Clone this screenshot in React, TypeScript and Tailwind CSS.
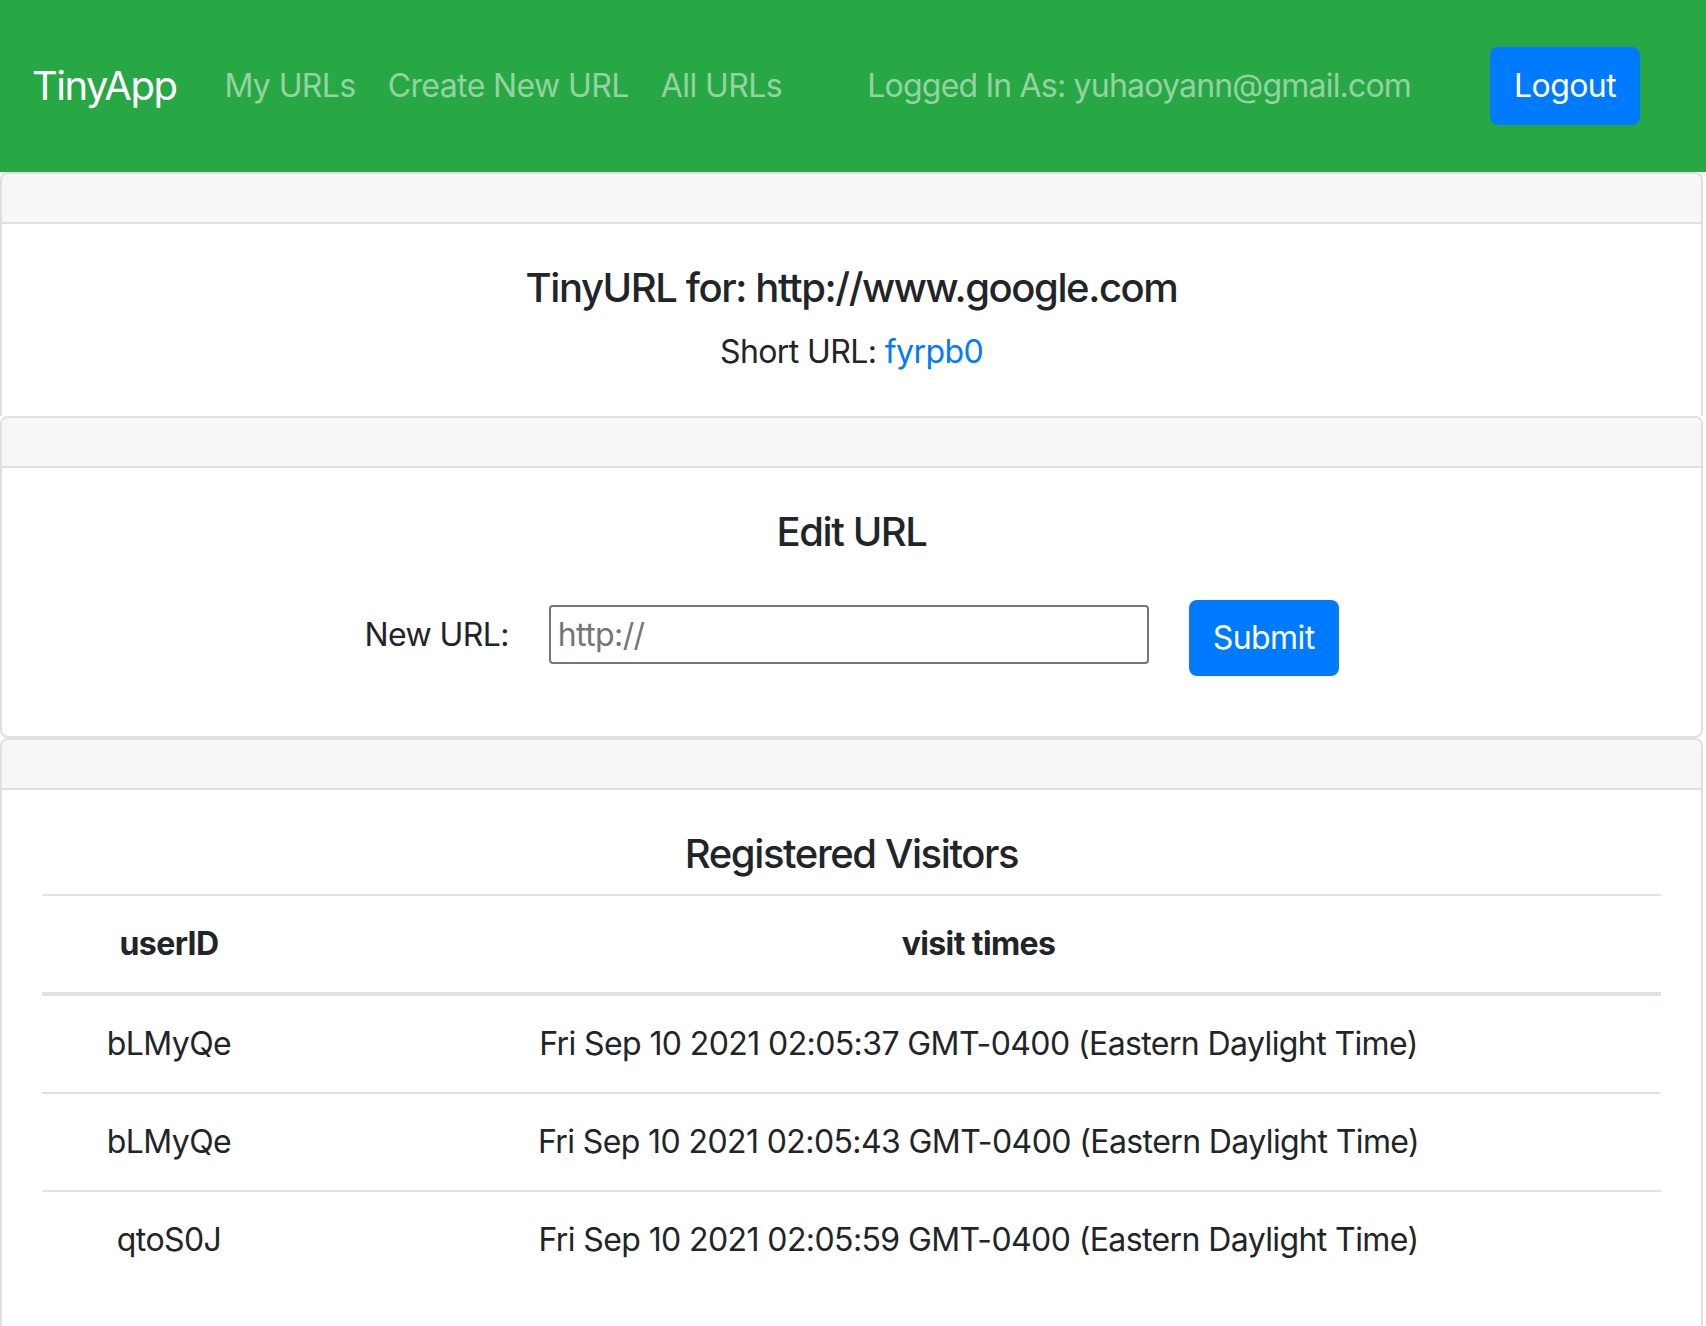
import React from "react";

// ─── Data ─────────────────────────────────────────────────────────────────────

const NAV_LINKS = ["My URLs", "Create New URL", "All URLs"];

const VISITS = [
  { userID: "bLMyQe", time: "Fri Sep 10 2021 02:05:37 GMT-0400 (Eastern Daylight Time)" },
  { userID: "bLMyQe", time: "Fri Sep 10 2021 02:05:43 GMT-0400 (Eastern Daylight Time)" },
  { userID: "qtoS0J", time: "Fri Sep 10 2021 02:05:59 GMT-0400 (Eastern Daylight Time)" },
];

// ─── Pieces ───────────────────────────────────────────────────────────────────

function Navbar() {
  return (
    <nav className="flex h-[172px] items-center bg-[#28a745] pl-[32px] pr-[66px]">
      <a className="mr-[32px] text-[40px] leading-[60px] tracking-[-1.5px] text-white">TinyApp</a>
      {NAV_LINKS.map((label) => (
        <a key={label} className="px-[16px] text-[32px] leading-[48px] text-white/50">
          {label}
        </a>
      ))}
      <span className="ml-auto mr-[79px] text-[32px] leading-[48px] tracking-[-0.8px] text-white/50">
        Logged In As: yuhaoyann@gmail.com
      </span>
      <button className="h-[78px] rounded-[8px] bg-[#007bff] px-[24px] text-[32px] leading-[48px] text-white">
        Logout
      </button>
    </nav>
  );
}

function CardHeader() {
  return <div className="h-[50px] border-b-2 border-[#dfdfdf] bg-[#f7f7f7]" />;
}

// ─── Page ─────────────────────────────────────────────────────────────────────

export default function App() {
  return (
    <div className="min-h-screen bg-white font-['Inter',sans-serif] tracking-[-0.6px] text-[#212529]">
      <Navbar />

      <div className="mr-[3px] text-center">
        {/* TinyURL info */}
        <div className="overflow-hidden rounded-t-[8px] border-x-2 border-t-2 border-[#dfdfdf]">
          <CardHeader />
          <div className="p-[40px]">
            <h5 className="mb-[16px] text-[40px] font-medium leading-[48px] tracking-[-1.4px]">
              TinyURL for: http://www.google.com
            </h5>
            <p className="text-[32px] leading-[48px]">
              Short URL: <a className="text-[#007bff]">fyrpb0</a>
            </p>
          </div>
        </div>

        {/* Edit */}
        <div className="overflow-hidden rounded-[8px] border-2 border-[#dfdfdf]">
          <CardHeader />
          <div className="px-[40px] pb-[60px] pt-[40px]">
            <h5 className="text-[40px] font-medium leading-[48px] tracking-[-1.4px]">Edit URL</h5>
            <form className="mt-[44px] flex items-start justify-center gap-[40px]">
              <label className="mt-[11px] text-[32px] leading-[48px]">New URL:</label>
              <input
                type="text"
                placeholder="http://"
                className="mt-[5px] h-[59px] w-[600px] rounded-[4px] border-2 border-[#767676] px-[7px] text-[32px] tracking-[-0.6px] placeholder:text-[#757575]"
              />
              <button
                type="button"
                className="h-[76px] rounded-[8px] bg-[#007bff] px-[24px] text-[32px] leading-[48px] text-white"
              >
                Submit
              </button>
            </form>
          </div>
        </div>

        {/* Visitors */}
        <div className="overflow-hidden rounded-t-[8px] border-x-2 border-t-2 border-[#dfdfdf]">
          <CardHeader />
          <div className="p-[40px]">
            <h5 className="mb-[16px] text-[40px] font-medium leading-[48px] tracking-[-1.4px]">
              Registered Visitors
            </h5>
            <table className="w-full border-collapse text-[32px] leading-[48px]">
              <thead>
                <tr className="border-y-2 border-[#dee2e6]">
                  <th className="w-[254px] border-b-4 border-[#dee2e6] py-[24px] font-bold">userID</th>
                  <th className="border-b-4 border-[#dee2e6] py-[24px] font-bold">visit times</th>
                </tr>
              </thead>
              <tbody>
                {VISITS.map((v, i) => (
                  <tr key={i} className="border-t-2 border-[#dee2e6]">
                    <td className="py-[24px]">{v.userID}</td>
                    <td className="py-[24px]">{v.time}</td>
                  </tr>
                ))}
              </tbody>
            </table>
          </div>
        </div>
      </div>
    </div>
  );
}
